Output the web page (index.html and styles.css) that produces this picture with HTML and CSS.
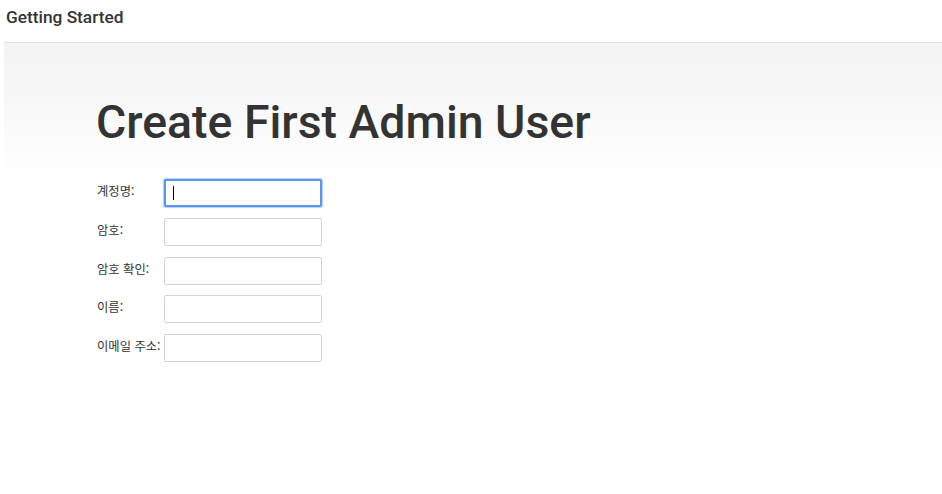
FILE: index.html
```html
<!DOCTYPE html>
<html lang="ko">
<head>
<meta charset="utf-8">
<title>Getting Started</title>
<link rel="stylesheet" href="styles.css">
</head>
<body>
<div class="header">Getting Started</div>
<div class="main">
  <h1 class="title">Create First Admin User</h1>
  <div class="form">
    <div class="row">
      <label class="label">계정명:</label>
      <div class="field">
        <input class="input focused" type="text">
        <span class="caret"></span>
      </div>
    </div>
    <div class="row">
      <label class="label">암호:</label>
      <div class="field"><input class="input" type="password"></div>
    </div>
    <div class="row">
      <label class="label">암호 확인:</label>
      <div class="field"><input class="input" type="password"></div>
    </div>
    <div class="row">
      <label class="label">이름:</label>
      <div class="field"><input class="input" type="text"></div>
    </div>
    <div class="row">
      <label class="label">이메일 주소:</label>
      <div class="field"><input class="input" type="text"></div>
    </div>
  </div>
</div>
</body>
</html>
```
FILE: styles.css
```css
html, body {
  margin: 0;
  padding: 0;
  background: #fff;
  font-family: Roboto, "Noto Sans CJK KR", sans-serif;
  color: #333;
}
.header {
  margin-left: 4px;
  height: 43px;
  box-sizing: border-box;
  border-bottom: 1px solid #e3e3e3;
  padding: 7px 0 0 2px;
  font-size: 17.3px;
  line-height: 20px;
  font-weight: 500;
  color: #333;
}
.main {
  margin-left: 4px;
  padding: 0 0 0 92px;
  background: linear-gradient(to bottom, #f3f3f3 0px, #ffffff 140px);
  height: 451px;
  box-sizing: border-box;
}
.title {
  margin: 0;
  padding-top: 52px;
  font-size: 46.4px;
  line-height: 54px;
  font-weight: 500;
  color: #333;
}
.form {
  margin-top: 30px;
  display: flex;
  flex-direction: column;
  gap: 10.75px;
}
.row {
  display: flex;
  align-items: center;
  height: 28px;
}
.label {
  width: 67px;
  padding-left: 1px;
  margin-bottom: 4px;
  font-family: "Noto Sans CJK KR", sans-serif;
  font-size: 12.3px;
  color: #333;
}
.field {
  position: relative;
}
.input {
  display: block;
  width: 158px;
  height: 28px;
  box-sizing: border-box;
  margin: 0;
  border: 1px solid #d4d4d4;
  border-radius: 2px;
  background: #fff;
  outline: none;
  padding: 0 6px;
}
.input.focused {
  border: 2px solid #5b95ee;
  box-shadow: 0 0 1px 1px rgba(91, 149, 238, 0.45);
}
.caret {
  position: absolute;
  left: 9px;
  top: 7px;
  width: 1px;
  height: 14px;
  background: #000;
}
```
